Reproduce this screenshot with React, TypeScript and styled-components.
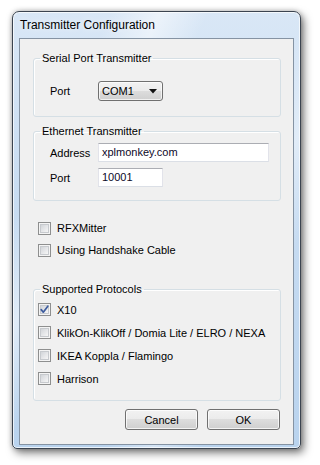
import React from 'react';
import styled, { createGlobalStyle } from 'styled-components';

const GlobalStyle = createGlobalStyle`
    html, body {
        margin: 0;
        padding: 0;
        background: #ffffff;
    }
    body {
        font-family: "Liberation Sans", Arial, sans-serif;
        font-size: 11px;
        color: #000;
    }
`;

export default function App() {
    return (<>
        <GlobalStyle />
        <Desktop>
            <Frame>
                <TitleBar>Transmitter Configuration</TitleBar>
                <Client>
                    <Group>
                        <Legend>Serial Port Transmitter</Legend>
                        <FieldRow $top={16}>
                            <FieldLabel>Port</FieldLabel>
                            <Combo>
                                <span>COM1</span>
                                <svg width="8" height="5" viewBox="0 0 8 5"><path d="M0 0 H8 L4 4.5 Z" fill="#111" /></svg>
                            </Combo>
                        </FieldRow>
                        <GroupEnd $pad={15} />
                    </Group>

                    <Group $top={8}>
                        <Legend>Ethernet Transmitter</Legend>
                        <FieldRow $top={5}>
                            <FieldLabel>Address</FieldLabel>
                            <TextBox $width={171}>xplmonkey.com</TextBox>
                        </FieldRow>
                        <FieldRow $top={6}>
                            <FieldLabel>Port</FieldLabel>
                            <TextBox $width={65}>10001</TextBox>
                        </FieldRow>
                        <GroupEnd $pad={13} />
                    </Group>

                    <CheckList $top={16} $left={5}>
                        <CheckRow label="RFXMitter" />
                        <CheckRow label="Using Handshake Cable" />
                    </CheckList>

                    <Group $top={22}>
                        <Legend>Supported Protocols</Legend>
                        <CheckList $top={2} $left={4}>
                            <CheckRow label="X10" checked rowHeight={23} />
                            <CheckRow label="KlikOn-KlikOff / Domia Lite / ELRO / NEXA" rowHeight={23} />
                            <CheckRow label="IKEA Koppla / Flamingo" rowHeight={23} />
                            <CheckRow label="Harrison" rowHeight={23} />
                        </CheckList>
                        <GroupEnd $pad={10} />
                    </Group>

                    <ButtonBar>
                        <Button>Cancel</Button>
                        <Button>OK</Button>
                    </ButtonBar>
                </Client>
            </Frame>
        </Desktop>
    </>);
}

function CheckRow({ label, checked, rowHeight }: { label: string; checked?: boolean; rowHeight?: number }) {
    return (
        <Row $height={rowHeight || 22}>
            <Box>
                {checked ? (
                    <svg width="11" height="11" viewBox="0 0 11 11">
                        <path d="M2.2 5.6 L4.3 8.2 L8.8 2.2" fill="none" stroke="#3d5c9e" strokeWidth="1.7" strokeLinecap="round" strokeLinejoin="round" />
                    </svg>
                ) : null}
            </Box>
            <span>{label}</span>
        </Row>
    );
}

const Desktop = styled.div`
    width: 320px;
    height: 465px;
    padding: 11px 0 0 12px;
    box-sizing: border-box;
`;

const Frame = styled.div`
    width: 289px;
    height: 438px;
    box-sizing: border-box;
    display: flex;
    flex-direction: column;
    border: 1px solid #3b4450;
    border-radius: 7px 7px 5px 5px;
    background:
        linear-gradient(115deg, rgba(255,255,255,0) 20%, rgba(255,255,255,0.5) 30%, rgba(255,255,255,0) 40%, rgba(255,255,255,0) 60%, rgba(255,255,255,0.4) 70%, rgba(255,255,255,0) 80%),
        linear-gradient(to bottom, #d9e7f6 0%, #c9ddf2 40%, #b9d3ee 100%);
    box-shadow:
        inset 0 0 0 1px rgba(255,255,255,0.7),
        3px 4px 9px rgba(0,0,0,0.5),
        0 0 5px rgba(0,0,0,0.25);
`;

const TitleBar = styled.div`
    height: 26px;
    line-height: 26px;
    padding-left: 7px;
    font-size: 12px;
    color: #000;
    text-shadow: 0 0 6px rgba(255,255,255,0.9);
`;

const Client = styled.div`
    flex: 1;
    margin: 0 6px 3px 6px;
    border: 1px solid #8593a3;
    background: #f0f0f0;
    padding: 13px 12px 0 13px;
    display: flex;
    flex-direction: column;
`;

const Group = styled.fieldset<{ $top?: number }>`
    margin: ${p => p.$top || 0}px 0 0 0;
    padding: 0;
    min-width: 0;
    border: 1px solid #d5dfe5;
    border-radius: 3px;
    box-shadow: inset 1px 1px 0 #ffffff;
`;

const Legend = styled.legend`
    margin-left: 6px;
    padding: 0 2px;
    line-height: 13px;
    font-size: 11px;
`;

const GroupEnd = styled.div<{ $pad: number }>`
    height: ${p => p.$pad}px;
`;

const FieldRow = styled.div<{ $top: number }>`
    display: flex;
    align-items: center;
    margin-top: ${p => p.$top}px;
    padding-left: 16px;
`;

const FieldLabel = styled.div`
    width: 48px;
`;

const Combo = styled.div`
    width: 65px;
    height: 20px;
    box-sizing: border-box;
    border: 1px solid #707070;
    border-radius: 3px;
    background: linear-gradient(to bottom, #f2f2f2 0%, #ebebeb 49%, #dddddd 50%, #cfcfcf 100%);
    box-shadow: inset 0 0 0 1px rgba(255,255,255,0.7);
    display: flex;
    align-items: center;
    justify-content: space-between;
    padding: 0 5px 0 3px;
    font-size: 11px;
`;

const TextBox = styled.div<{ $width: number }>`
    width: ${p => p.$width}px;
    height: 19px;
    box-sizing: border-box;
    border: 1px solid #dbdfe6;
    border-top-color: #abadb3;
    border-left-color: #e2e3ea;
    border-right-color: #e2e3ea;
    background: #ffffff;
    padding: 0 3px;
    line-height: 17px;
    color: #0d0828;
`;

const CheckList = styled.div<{ $top: number; $left: number }>`
    display: flex;
    flex-direction: column;
    margin-top: ${p => p.$top}px;
    padding-left: ${p => p.$left}px;
`;

const Row = styled.div<{ $height: number }>`
    display: flex;
    align-items: center;
    gap: 6px;
    height: ${p => p.$height}px;
`;

const Box = styled.span`
    position: relative;
    width: 13px;
    height: 13px;
    box-sizing: border-box;
    border: 1px solid #8e8f8f;
    background: #f4f4f4;
    display: flex;
    align-items: center;
    justify-content: center;
    flex-shrink: 0;
    &::before {
        content: "";
        position: absolute;
        left: 1px;
        top: 1px;
        right: 1px;
        bottom: 1px;
        border: 1px solid #c7cace;
        background: linear-gradient(135deg, #d2d5d9 0%, #e8e9eb 60%, #f6f6f6 100%);
    }
    svg {
        position: relative;
    }
`;

const ButtonBar = styled.div`
    display: flex;
    justify-content: flex-end;
    gap: 9px;
    margin-top: 8px;
    padding-right: 1px;
`;

const Button = styled.div`
    width: 73px;
    height: 21px;
    box-sizing: border-box;
    border: 1px solid #707070;
    border-radius: 3px;
    background: linear-gradient(to bottom, #f2f2f2 0%, #ebebeb 49%, #dddddd 50%, #cfcfcf 100%);
    box-shadow: inset 0 0 0 1px rgba(255,255,255,0.75);
    display: flex;
    align-items: center;
    justify-content: center;
    font-size: 11px;
`;
